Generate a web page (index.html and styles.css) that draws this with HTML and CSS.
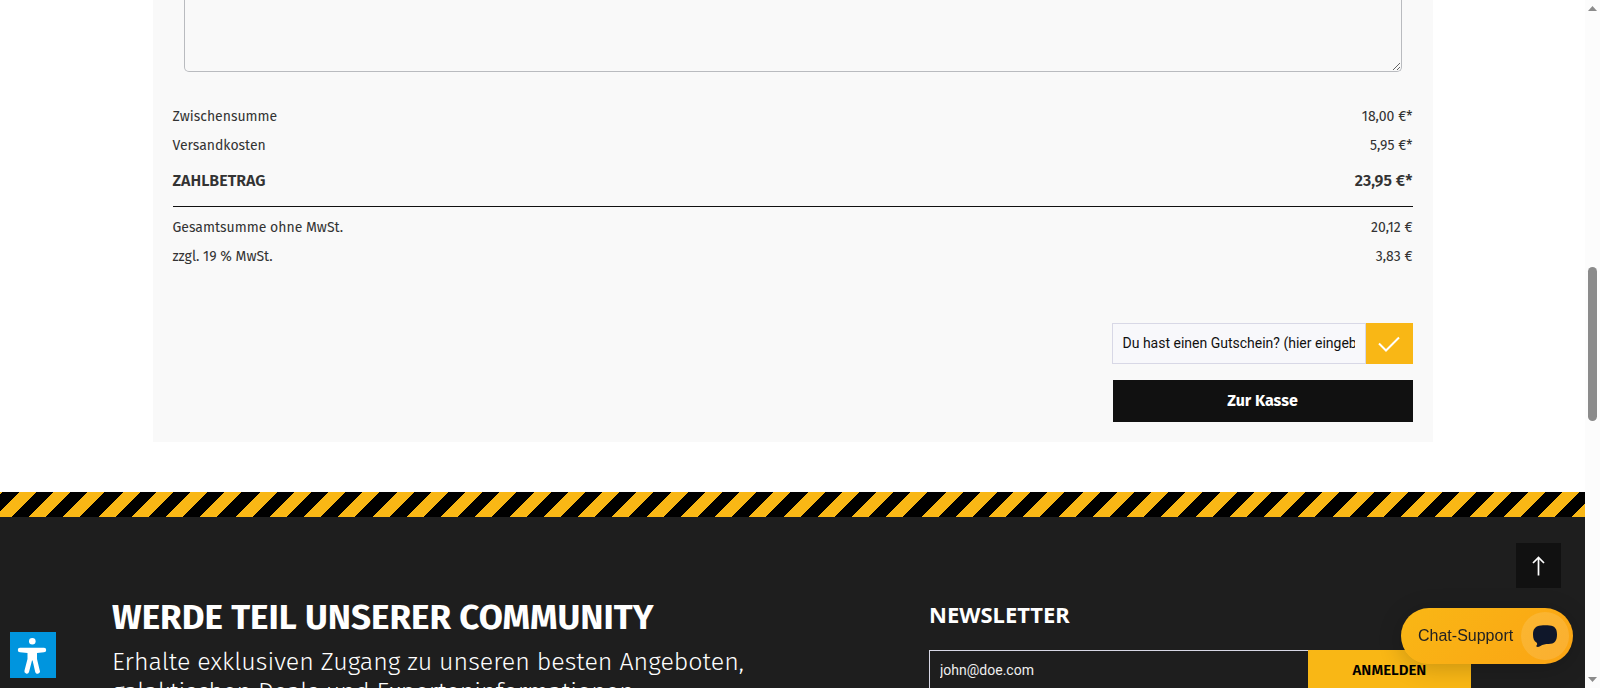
FILE: index.html
```html
<!DOCTYPE html>
<html lang="de">
<head>
    <meta charset="UTF-8">
    <meta name="viewport" content="width=device-width, initial-scale=1.0">
    <title>Warenkorb</title>
    <link rel="stylesheet" href="styles.css">
</head>
<body>
    <main class="cart">
        <textarea class="comment" aria-label="Kommentar"></textarea>

        <dl class="summary">
            <div class="row"><dt>Zwischensumme</dt><dd>18,00 €*</dd></div>
            <div class="row"><dt>Versandkosten</dt><dd>5,95 €*</dd></div>
            <div class="row total"><dt>ZAHLBETRAG</dt><dd>23,95 €*</dd></div>
            <div class="row"><dt>Gesamtsumme ohne MwSt.</dt><dd>20,12 €</dd></div>
            <div class="row"><dt>zzgl. 19 % MwSt.</dt><dd>3,83 €</dd></div>
        </dl>

        <div class="actions">
            <form class="voucher">
                <input type="text" aria-label="Gutschein" placeholder="Du hast einen Gutschein? (hier eingeben)">
                <button type="button" aria-label="Gutschein einlösen">
                    <svg width="22" height="16" viewBox="0 0 22 16"><path d="M1 7.500L8 14.500L21 1.500" fill="none" stroke="#fff" stroke-width="2"/></svg>
                </button>
            </form>
            <button type="button" class="checkout">Zur Kasse</button>
        </div>
    </main>

    <footer>
        <div class="stripes"></div>
        <div class="footer-inner">
            <section class="community">
                <h2>WERDE TEIL UNSERER COMMUNITY</h2>
                <p>Erhalte exklusiven Zugang zu unseren besten Angeboten,<br>galaktischen Deals und Experteninformationen.</p>
            </section>
            <section class="newsletter">
                <h3>NEWSLETTER</h3>
                <form class="signup">
                    <input type="email" aria-label="E-Mail-Adresse" placeholder="john@doe.com">
                    <button type="button">ANMELDEN</button>
                </form>
            </section>
        </div>
    </footer>

    <button type="button" class="accessibility" aria-label="Barrierefreiheit">
        <svg width="46" height="46" viewBox="0 0 46 46" fill="#fff">
            <circle cx="22.300" cy="9.200" r="3.300"/>
            <path d="M10 15.800H34a2 2 0 0 1 0 4.400L27 21V27L29.700 38.200a2 2 0 0 1-4.400 2L22.600 28.500h-.6L19 40a2 2 0 0 1-4.500-1.500L17.500 27V21L10 20.200a2 2 0 0 1 0-4.400z"/>
        </svg>
    </button>
    <button type="button" class="to-top" aria-label="Nach oben">
        <svg width="13" height="20" viewBox="0 0 13 20" fill="none" stroke="#fff" stroke-width="1.700"><path d="M6.500 19.500V1.500M1 7L6.500 1.500L12 7"/></svg>
    </button>
    <button type="button" class="chat">
        Chat-Support
        <span class="bubble">
            <svg width="26" height="24" viewBox="0 0 26 24"><path d="M9 1.500C11.500 1 15 1 17.500 1.500C23 2 25 5 25 10.500C25 17 22.500 20 16.500 20C13.500 20 11 20.300 8 22.300C6 23.500 3.500 23 4.500 21.500C5.500 20.500 5.300 19.300 4.500 18.500C2 17 1 14.500 1 10.500C1 5 3.500 2 9 1.500z" fill="#0f172a"/></svg>
        </span>
    </button>

    <div class="scrollbar" aria-hidden="true">
        <svg width="9" height="5" viewBox="0 0 9 5"><path d="M0 5L4.500 0L9 5z" fill="#8b8b8b"/></svg>
        <span class="thumb"></span>
        <svg width="9" height="5" viewBox="0 0 9 5"><path d="M0 0L4.500 5L9 0z" fill="#8b8b8b"/></svg>
    </div>
</body>
</html>
```
FILE: styles.css
```css
* {
    box-sizing: border-box;
}
body {
    margin: 0;
    padding-right: 15px;
    height: 100vh;
    overflow: hidden;
    background: #fff;
    color: #333;
    font-family: "Fira Sans", "Noto Sans", sans-serif;
    font-size: 14px;
}
button {
    border: none;
    padding: 0;
    font-family: inherit;
    cursor: pointer;
}
svg {
    display: block;
}

/* Warenkorb */
.cart {
    max-width: 1280px;
    margin: 0 auto;
    padding: 0 20px 20px;
    background: #f9f9f9;
}
.comment {
    display: block;
    width: calc(100% - 22px);
    height: 72px;
    margin: 0 11px;
    border: 1px solid #b9bbbf;
    border-top: none;
    border-radius: 0 0 5px 5px;
    background: transparent;
}
.summary {
    margin: 0;
    padding-top: 30px;
}
.row {
    display: flex;
    justify-content: space-between;
    line-height: 29px;
}
.row dd {
    margin: 0;
}
.total {
    margin-bottom: 6px;
    padding-bottom: 5px;
    border-bottom: 1px solid #111;
    font-size: 16px;
    font-weight: 600;
    line-height: 41px;
}
.actions {
    display: flex;
    flex-direction: column;
    gap: 16px;
    width: 301px;
    margin: 52px 0 0 auto;
}
.voucher {
    display: flex;
    height: 41px;
}
.voucher input {
    flex: 1;
    min-width: 0;
    padding: 0 10px 2px;
    border: 1px solid #d8d8e6;
    background: #f8f8fb;
    font-family: Roboto, sans-serif;
    font-size: 14px;
}
.voucher input::placeholder {
    color: #111;
}
.voucher button {
    display: flex;
    align-items: center;
    justify-content: center;
    width: 47px;
    background: #f9b715;
}
.checkout {
    height: 42px;
    margin-left: 1px;
    padding-bottom: 2px;
    background: #111;
    color: #fff;
    font-size: 16px;
    font-weight: 700;
}

/* Footer */
footer {
    margin-top: 50px;
    background: #1e1e1e;
    color: #fff;
}
.stripes {
    height: 25px;
    background: repeating-linear-gradient(135deg,
        #f9b715 0 2px, #000 2px 14px,
        #f9b715 14px 26px, #000 26px 38px,
        #f9b715 38px 50px, #000 50px 62px,
        #f9b715 62px 74px, #000 74px 87px,
        #f9b715 87px 97px);
}
.footer-inner {
    display: grid;
    grid-template-columns: 1fr 542px;
    padding: 80px 114px 60px 112px;
}
.community h2 {
    margin: 0;
    font-size: 35px;
    font-weight: 700;
    line-height: 40px;
}
.community p {
    margin: 10px 0 0;
    font-size: 25px;
    font-weight: 300;
    line-height: 30px;
}
.newsletter h3 {
    margin: 0 0 19px;
    font-family: "Noto Sans", sans-serif;
    font-size: 22px;
    font-weight: 700;
    line-height: 34px;
}
.signup {
    display: flex;
    height: 40px;
}
.signup input {
    flex: 1;
    min-width: 0;
    padding: 0 10px;
    border: 1px solid #d8d8e6;
    border-right: none;
    background: transparent;
    color: #fff;
    font-family: Roboto, sans-serif;
    font-size: 14px;
}
.signup input::placeholder {
    color: #eee;
}
.signup button {
    width: 163px;
    background: #f9b715;
    color: #000;
    font-size: 15px;
    font-weight: 600;
}

/* Schwebende Buttons */
.accessibility {
    position: fixed;
    left: 10px;
    bottom: 10px;
    width: 46px;
    height: 46px;
    background: #0095de;
}
.to-top {
    position: fixed;
    right: 39px;
    bottom: 100px;
    display: flex;
    align-items: center;
    justify-content: center;
    width: 45px;
    height: 45px;
    background: #111;
}
.chat {
    position: fixed;
    right: 27px;
    bottom: 24px;
    display: flex;
    align-items: center;
    justify-content: space-between;
    width: 172px;
    height: 56px;
    padding: 0 4px 0 17px;
    border-radius: 28px;
    background: linear-gradient(135deg, #f9b715, #fba414);
    box-shadow: 0 4px 24px rgba(0, 0, 0, 0.2);
    color: #222;
    font-family: "Liberation Sans", sans-serif;
    font-size: 16px;
}
.bubble {
    display: flex;
    align-items: center;
    justify-content: center;
    width: 48px;
    height: 48px;
    border-radius: 50%;
    background: rgba(255, 255, 255, 0.12);
}

/* Scrollleiste */
.scrollbar {
    position: fixed;
    top: 0;
    right: 0;
    bottom: 0;
    display: flex;
    flex-direction: column;
    align-items: center;
    width: 15px;
    padding: 6px 0;
    background: #fcfcfc;
}
.scrollbar .thumb {
    width: 9px;
    height: 154px;
    margin: 256px 0 auto;
    border-radius: 5px;
    background: #8b8b8b;
}
```
